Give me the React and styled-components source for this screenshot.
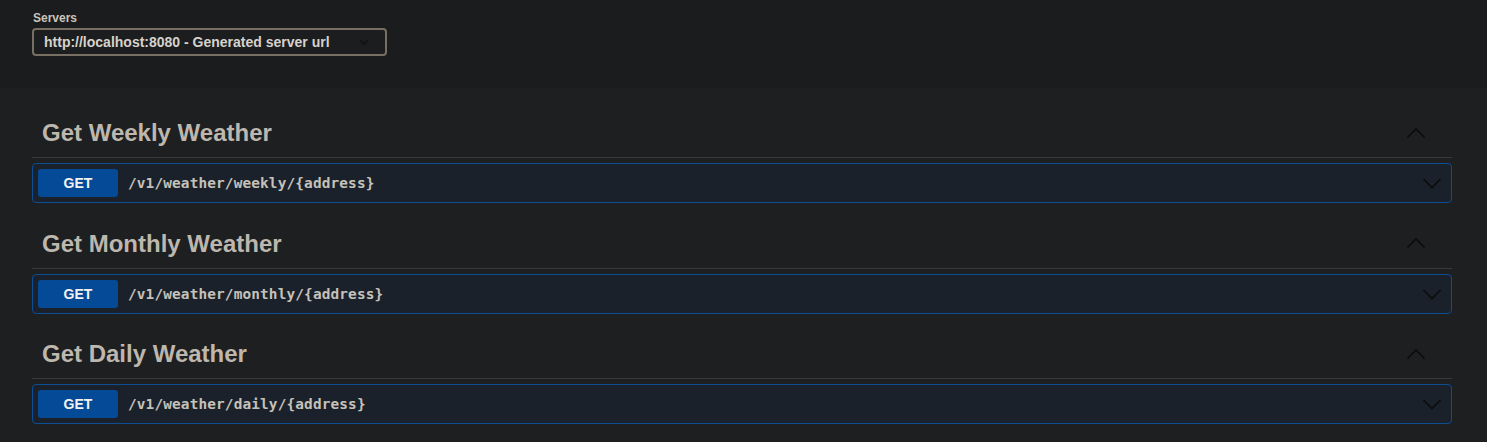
import React from 'react'
import styled, { createGlobalStyle } from 'styled-components'

const GlobalStyle = createGlobalStyle`
    html, body {
        margin: 0;
        padding: 0;
        background: #1e1f21;
        font-family: "Liberation Sans", Arial, sans-serif;
    }
`

const SchemeContainer = styled.div`
    height: 88px;
    box-sizing: border-box;
    padding: 11px 0 0 32px;
    background: #1b1c1e;
`

const ServersLabel = styled.div`
    font-size: 12px;
    font-weight: 700;
    line-height: 14px;
    color: #c9c4bc;
    margin: 0 0 3px 1px;
`

const Select = styled.div`
    width: 355px;
    height: 28px;
    box-sizing: border-box;
    border: 2px solid #776f62;
    border-radius: 4px;
    background: #1c1d1f;
    padding: 0 15px 0 10px;
    display: flex;
    align-items: center;
    justify-content: space-between;
    font-size: 14px;
    font-weight: 700;
    color: #d6d2cc;
`

const Wrapper = styled.div`
    width: 1420px;
    padding: 20px 0 0 32px;
`

const Tag = styled.div`
    display: flex;
    align-items: center;
    justify-content: space-between;
    box-sizing: border-box;
    height: 50px;
    padding: 10px 26px 10px 10px;
    margin-bottom: 5px;
    border-bottom: 1px solid #37393c;
`

const TagTitle = styled.h3`
    margin: 0;
    font-size: 24px;
    line-height: 29px;
    font-weight: 700;
    color: #bdb7ae;
`

const Opblock = styled.div`
    display: flex;
    align-items: center;
    box-sizing: border-box;
    height: 40px;
    padding: 5px;
    margin-bottom: 15.5px;
    border: 1px solid #0c4d94;
    border-radius: 4px;
    background: #1a212b;
`

const Method = styled.span`
    width: 80px;
    height: 28px;
    border-radius: 3px;
    background: #044a97;
    color: #f2f2f2;
    font-size: 14px;
    font-weight: 700;
    display: flex;
    align-items: center;
    justify-content: center;
`

const Path = styled.span`
    flex: 1;
    padding: 0 10px;
    font-family: "DejaVu Sans Mono", "Liberation Mono", monospace;
    font-size: 14.4px;
    font-weight: 700;
    letter-spacing: 0.14px;
    color: #c6c1b9;
`

const Arrow = styled.svg`
    width: 20px;
    height: 20px;
    margin-right: ${p => p.$mr || 0}px;
    flex-shrink: 0;
`

const Chevron = ({ up, mr }) => (
    <Arrow $mr={mr} viewBox="0 0 20 20">
        <polyline
            points={up ? '1.5,14.5 10,6 18.5,14.5' : '1.5,6 10,14.5 18.5,6'}
            fill="none"
            stroke="#0c0c0c"
            strokeWidth="1.6"
        />
    </Arrow>
)

const SmallChevron = () => (
    <svg width="12" height="12" viewBox="0 0 12 12">
        <polyline points="2,4 6,8 10,4" fill="none" stroke="#111" strokeWidth="1.6" />
    </svg>
)

const endpoints = [
    { title: 'Get Weekly Weather', path: '/v1/weather/weekly/{address}' },
    { title: 'Get Monthly Weather', path: '/v1/weather/monthly/{address}' },
    { title: 'Get Daily Weather', path: '/v1/weather/daily/{address}' },
]

const App = () => (
    <>
        <GlobalStyle />
        <SchemeContainer>
            <ServersLabel>Servers</ServersLabel>
            <Select>
                <span>http://localhost:8080 - Generated server url</span>
                <SmallChevron />
            </Select>
        </SchemeContainer>
        <Wrapper>
            {endpoints.map(e => (
                <section key={e.path}>
                    <Tag>
                        <TagTitle>{e.title}</TagTitle>
                        <Chevron up />
                    </Tag>
                    <Opblock>
                        <Method>GET</Method>
                        <Path>{e.path}</Path>
                        <Chevron mr={4} />
                    </Opblock>
                </section>
            ))}
        </Wrapper>
    </>
)

export default App
